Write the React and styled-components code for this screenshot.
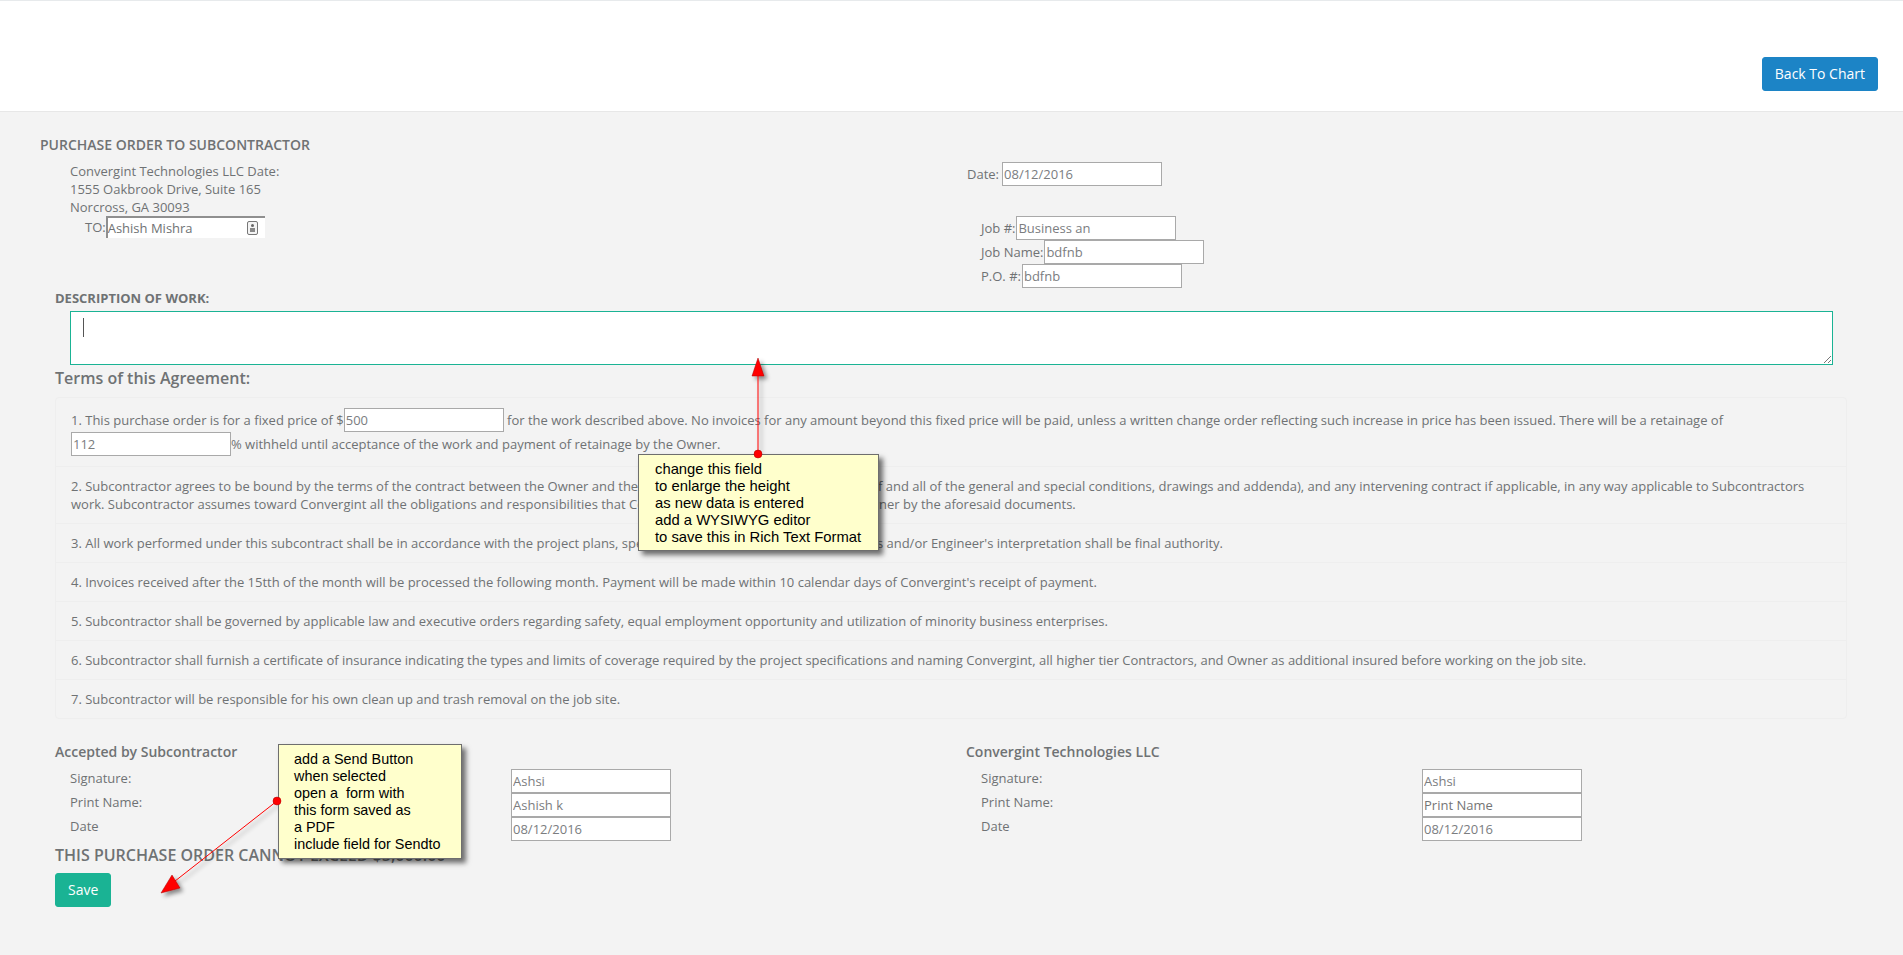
import React from 'react';
import styled, { createGlobalStyle } from 'styled-components';

const GlobalStyle = createGlobalStyle`
  html, body {
    margin: 0;
    padding: 0;
    background: #f3f3f3;
  }
  body {
    font-family: "Open Sans", "Liberation Sans", sans-serif;
    font-size: 13px;
    line-height: 18px;
    color: #6f7274;
  }
  * { box-sizing: border-box; }
`;

const Page = styled.div`
  position: relative;
  width: 1903px;
  height: 955px;
  overflow: hidden;
`;

const Header = styled.header`
  height: 112px;
  background: #fff;
  border-top: 1px solid #e7eaec;
  border-bottom: 1px solid #e7e7e7;
  display: flex;
  justify-content: flex-end;
  align-items: flex-start;
  padding: 56px 25px 0 0;
`;

const Button = styled.button`
  height: 34px;
  padding: 0 12px 2px;
  border: 1px solid ${p => p.$color};
  border-radius: 3px;
  background: ${p => p.$color};
  color: #fff;
  font: 400 14px "Open Sans", sans-serif;
`;

const Main = styled.main`
  padding: 24px 41px 0 40px;
`;

const Title = styled.h5`
  margin: 0;
  font-size: 14px;
  line-height: 18px;
  font-weight: 600;
  text-transform: uppercase;
`;

const TopGrid = styled.div`
  display: grid;
  grid-template-columns: 1fr 1fr;
  height: 135px;
`;

const Address = styled.div`
  padding: 8px 0 0 30px;
`;

const ToRow = styled.div`
  display: flex;
  align-items: center;
  padding-left: 15px;
`;

const ToInput = styled.div`
  width: 159px;
  height: 22px;
  background: #fff;
  border-top: 2px solid #8f8f8f;
  border-left: 2px solid #8f8f8f;
  font-size: 13px;
  line-height: 19px;
  display: flex;
  justify-content: space-between;
  align-items: center;
  padding-right: 7px;
`;

const RightCol = styled.div`
  padding: 8px 0 0 16px;
`;

const DateRow = styled.div`
  height: 24px;
  display: flex;
  align-items: center;
  gap: 3px;
`;

const JobFields = styled.div`
  margin-top: 30px;
  padding-left: 14px;
`;

const FieldRow = styled.div`
  height: 24px;
  display: flex;
  align-items: center;
  gap: 1px;
`;

const Field = styled.input`
  width: 160px;
  height: 24px;
  border: 1px solid #a9a9a9;
  background: #fff;
  padding: 1px;
  font: 400 13px "Open Sans", sans-serif;
  color: #7b7d7f;
  outline: none;
  &::placeholder { color: #757575; opacity: 1; }
`;

const Section = styled.section`
  padding: 0 15px;
`;

const Strong = styled.div`
  font-weight: 700;
  font-size: 13px;
  line-height: 18px;
`;

const DescBox = styled.div`
  position: relative;
  height: 54px;
  margin: 4px 14px 0 15px;
  background: #fff;
  border: 1px solid #1ab394;
`;

const Caret = styled.span`
  position: absolute;
  left: 12px;
  top: 6px;
  width: 1px;
  height: 19px;
  background: #555;
`;

const Grip = styled.svg`
  position: absolute;
  right: 0;
  bottom: 0;
`;

const Heading = styled.h3`
  margin: 4px 0 0;
  font-size: 16px;
  line-height: 19px;
  font-weight: 600;
`;

const Terms = styled.ul`
  list-style: none;
  margin: 9px 0 0;
  padding: 0;
`;

const Term = styled.li`
  padding: 10px 15px;
  border: 1px solid #eeeeee;
  margin-top: -1px;
  &:first-child {
    margin-top: 0;
    border-radius: 4px 4px 0 0;
  }
  &:last-child { border-radius: 0 0 4px 4px; }
`;

const SignGrid = styled.div`
  display: grid;
  grid-template-columns: 1fr 1fr;
  margin: 24px -15px 0;
`;

const SignCol = styled.div`
  padding: 0 15px;
`;

const SignHeading = styled.h4`
  margin: 0;
  font-size: 14px;
  line-height: 18px;
  font-weight: 600;
`;

const SignRows = styled.div`
  margin-top: 8px;
  padding-left: 15px;
`;

const SignRow = styled.div`
  height: 24px;
  display: grid;
  grid-template-columns: 441px 160px;
  line-height: 18px;
`;

const Limit = styled.h3`
  margin: 5px 0 0;
  font-size: 16px;
  line-height: 19px;
  font-weight: 600;
  text-transform: uppercase;
`;

const SaveWrap = styled.div`
  margin-top: 8px;
`;

const Note = styled.div`
  position: absolute;
  left: ${p => p.$x}px;
  top: ${p => p.$y}px;
  width: ${p => p.$w}px;
  height: ${p => p.$h}px;
  padding: ${p => p.$pad};
  background: #ffffcc;
  border: 1px solid #6e6e6e;
  box-shadow: 4px 4px 5px rgba(0, 0, 0, 0.55);
  color: #000;
  font: 400 ${p => p.$size}px/17px "Liberation Sans", Arial, sans-serif;
  white-space: pre;
`;

const Overlay = styled.svg`
  position: absolute;
  left: 0;
  top: 0;
  pointer-events: none;
`;

const terms = [
  "2. Subcontractor agrees to be bound by the terms of the contract between the Owner and the Contractor (including a provision hereof and all of the general and special conditions, drawings and addenda), and any intervening contract if applicable, in any way applicable to Subcontractors work. Subcontractor assumes toward Convergint all the obligations and responsibilities that Convergint assumes towards the said Owner by the aforesaid documents.",
  "3. All work performed under this subcontract shall be in accordance with the project plans, specifications, and, the Owner's, Architect's and/or Engineer's interpretation shall be final authority.",
  "4. Invoices received after the 15tth of the month will be processed the following month. Payment will be made within 10 calendar days of Convergint's receipt of payment.",
  "5. Subcontractor shall be governed by applicable law and executive orders regarding safety, equal employment opportunity and utilization of minority business enterprises.",
  "6. Subcontractor shall furnish a certificate of insurance indicating the types and limits of coverage required by the project specifications and naming Convergint, all higher tier Contractors, and Owner as additional insured before working on the job site.",
  "7. Subcontractor will be responsible for his own clean up and trash removal on the job site.",
];

const ContactIcon = () => (
  <svg width="11" height="14" viewBox="0 0 11 14">
    <rect x="0.5" y="0.5" width="10" height="13" rx="1.5" fill="#f4f4f4" stroke="#777" />
    <circle cx="5.5" cy="4.5" r="1.5" fill="#666" />
    <rect x="3" y="7" width="5" height="4" fill="#888" />
  </svg>
);

const SignBlock = ({ title, values }) => (
  <SignCol>
    <SignHeading>{title}</SignHeading>
    <SignRows>
      <SignRow><span>Signature:</span><Field defaultValue={values[0]} /></SignRow>
      <SignRow><span>Print Name:</span><Field defaultValue={values[1]} placeholder="Print Name" /></SignRow>
      <SignRow><span>Date</span><Field defaultValue={values[2]} /></SignRow>
    </SignRows>
  </SignCol>
);

const App = () => (
  <Page>
    <GlobalStyle />
    <Header>
      <Button $color="#1c84c6">Back To Chart</Button>
    </Header>
    <Main>
      <Title>Purchase Order to Subcontractor</Title>
      <TopGrid>
        <Address>
          Convergint Technologies LLC Date:<br />
          1555 Oakbrook Drive, Suite 165<br />
          Norcross, GA 30093
          <ToRow>
            TO:
            <ToInput>Ashish Mishra<ContactIcon /></ToInput>
          </ToRow>
        </Address>
        <RightCol>
          <DateRow>Date: <Field defaultValue="08/12/2016" /></DateRow>
          <JobFields>
            <FieldRow>Job #:<Field defaultValue="Business an" /></FieldRow>
            <FieldRow>Job Name:<Field defaultValue="bdfnb" /></FieldRow>
            <FieldRow>P.O. #:<Field defaultValue="bdfnb" /></FieldRow>
          </JobFields>
        </RightCol>
      </TopGrid>
      <Section>
        <Strong>DESCRIPTION OF WORK:</Strong>
        <DescBox>
          <Caret />
          <Grip width="10" height="10" viewBox="0 0 10 10">
            <path d="M2 9 L9 2 M6 9 L9 6" stroke="#777" strokeWidth="1" />
          </Grip>
        </DescBox>
        <Heading>Terms of this Agreement:</Heading>
        <Terms>
          <Term>
            1. This purchase order is for a fixed price of $<Field defaultValue="500" /> for the work described above. No invoices for any amount beyond this fixed price will be paid, unless a written change order reflecting such increase in price has been issued. There will be a retainage of <Field defaultValue="112" />% withheld until acceptance of the work and payment of retainage by the Owner.
          </Term>
          {terms.map(t => <Term key={t}>{t}</Term>)}
        </Terms>
        <SignGrid>
          <SignBlock title="Accepted by Subcontractor" values={['Ashsi', 'Ashish k', '08/12/2016']} />
          <SignBlock title="Convergint Technologies LLC" values={['Ashsi', '', '08/12/2016']} />
        </SignGrid>
        <Limit>This Purchase Order Cannot Exceed $5,000.00</Limit>
        <SaveWrap>
          <Button $color="#1ab394">Save</Button>
        </SaveWrap>
      </Section>
    </Main>

    <Overlay width="1903" height="955">
      <defs>
        <filter id="arrowShadow" x="-50%" y="-50%" width="200%" height="200%">
          <feDropShadow dx="3" dy="3" stdDeviation="2" floodColor="#000" floodOpacity="0.45" />
        </filter>
      </defs>
      <g filter="url(#arrowShadow)">
        <line x1="758" y1="454" x2="758" y2="372" stroke="#f00" strokeWidth="1" />
        <path d="M758 358 L764 376 L752 376 Z" fill="#f00" stroke="#a00" strokeWidth="0.5" />
        <line x1="277" y1="801" x2="170" y2="885" stroke="#f00" strokeWidth="1" />
        <path d="M161 893 L172 875 L180 888 Z" fill="#f00" stroke="#a00" strokeWidth="0.5" />
      </g>
    </Overlay>
    <Note $x={638} $y={454} $w={241} $h={97} $pad="6px 0 0 16px" $size={14.8}>{`change this field
to enlarge the height
as new data is entered
add a WYSIWYG editor
to save this in Rich Text Format`}</Note>
    <Note $x={278} $y={744} $w={184} $h={115} $pad="6px 0 0 15px" $size={14.4}>{`add a Send Button
when selected
open a  form with
this form saved as
a PDF
include field for Sendto`}</Note>
    <Overlay width="1903" height="955">
      <circle cx="758" cy="454" r="4" fill="#f00" stroke="#a00" strokeWidth="0.5" />
      <circle cx="277" cy="801" r="4" fill="#f00" stroke="#a00" strokeWidth="0.5" />
    </Overlay>
  </Page>
);

export default App;
